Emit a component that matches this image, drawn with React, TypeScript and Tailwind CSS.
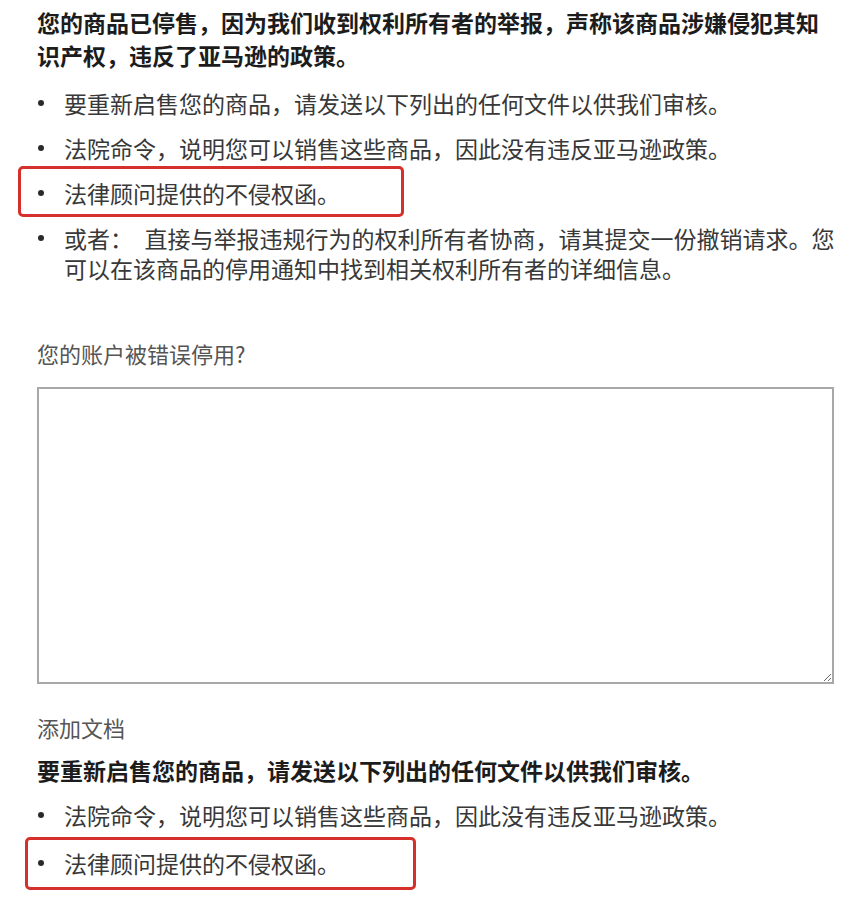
const FONT = { fontFamily: '"Noto Sans CJK SC", "Noto Sans", sans-serif' }

const TOP_ITEMS = [
  { text: '要重新启售您的商品，请发送以下列出的任何文件以供我们审核。' },
  { text: '法院命令，说明您可以销售这些商品，因此没有违反亚马逊政策。' },
  { text: '法律顾问提供的不侵权函。', marked: true },
  { text: '或者：\u2002直接与举报违规行为的权利所有者协商，请其提交一份撤销请求。您可以在该商品的停用通知中找到相关权利所有者的详细信息。' },
]

const DOC_ITEMS = [
  { text: '法院命令，说明您可以销售这些商品，因此没有违反亚马逊政策。' },
  { text: '法律顾问提供的不侵权函。', marked: true },
]

function Bullet({ text, children }: { text: string; children?: React.ReactNode }) {
  return (
    <li className="relative flex text-[23px] leading-[30px] text-[#383838]">
      <span className="flex h-[30px] w-[27px] shrink-0 items-center">
        <span className="ml-[1px] h-[6px] w-[6px] rounded-full bg-[#2a2a2a]" />
      </span>
      <span>{text}</span>
      {children}
    </li>
  )
}

export default function App() {
  return (
    <div className="min-h-screen bg-white" style={FONT}>
      <div className="w-[835px] pl-[37px] pt-[6px]">
        <h1 className="text-[23px] font-bold leading-[33px] text-[#1c1c1c]">
          您的商品已停售，因为我们收到权利所有者的举报，声称该商品涉嫌侵犯其知识产权，违反了亚马逊的政策。
        </h1>

        <ul className="mt-[16px] space-y-[15px]">
          {TOP_ITEMS.map((item, i) => (
            <Bullet key={i} text={item.text}>
              {item.marked && (
                <span className="pointer-events-none absolute -left-[19px] -top-[12px] h-[51px] w-[386px] rounded-[5px] border-[3px] border-[#d6302c]" />
              )}
            </Bullet>
          ))}
        </ul>

        <p className="mt-[55px] text-[22px] leading-[30px] text-[#555]">您的账户被错误停用?</p>

        <textarea
          className="mt-[19px] block h-[297px] w-[797px] border-2 border-[#a8a8a8] bg-white outline-none"
          aria-label="您的账户被错误停用?"
        />

        <p className="mt-[28px] text-[22px] leading-[30px] text-[#555]">添加文档</p>
        <p className="mt-[13px] text-[23px] font-bold leading-[30px] text-[#1c1c1c]">
          要重新启售您的商品，请发送以下列出的任何文件以供我们审核。
        </p>

        <ul className="mt-[15px] space-y-[18px]">
          {DOC_ITEMS.map((item, i) => (
            <Bullet key={i} text={item.text}>
              {item.marked && (
                <span className="pointer-events-none absolute -left-[12px] -top-[11px] h-[53px] w-[391px] rounded-[5px] border-[3px] border-[#d6302c]" />
              )}
            </Bullet>
          ))}
        </ul>
      </div>
    </div>
  )
}
